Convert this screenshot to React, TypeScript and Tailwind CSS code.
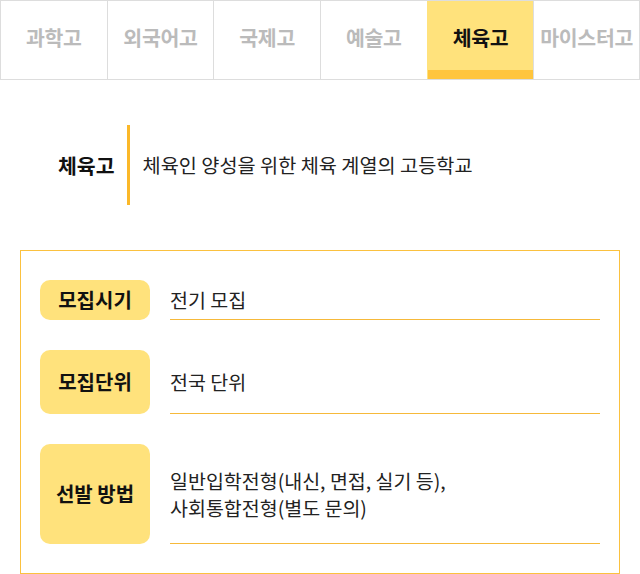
const tabs = ["과학고", "외국어고", "국제고", "예술고", "체육고", "마이스터고"];

const rows = [
  { label: "모집시기", value: ["전기 모집"], height: "h-[40px]" },
  { label: "모집단위", value: ["전국 단위"], height: "h-[64px]" },
  {
    label: "선발 방법",
    value: ["일반입학전형(내신, 면접, 실기 등),", "사회통합전형(별도 문의)"],
    height: "h-[100px]",
  },
];

export default function App() {
  const active = "체육고";

  return (
    <div className="w-[640px] h-[574px] bg-white overflow-hidden font-['Noto_Sans_CJK_KR','Noto_Sans',sans-serif]">
      {/* tabs */}
      <div className="grid grid-cols-6 h-[80px] border-t border-b border-[#dddddd]">
        {tabs.map((tab, i) => {
          const isActive = tab === active;
          return (
            <div
              key={tab}
              className={`relative flex items-center justify-center border-l border-[#dddddd] ${
                i === tabs.length - 1 ? "border-r" : ""
              } ${isActive ? "bg-[#ffe27c] border-l-[#ffe27c]" : ""}`}
            >
              <span
                className={`text-[20.5px] font-bold tracking-[-0.3px] pb-[6px] ${
                  isActive ? "text-[#111111]" : "text-[#bbbbbb]"
                }`}
              >
                {tab}
              </span>
              {isActive && <div className="absolute left-0 right-0 bottom-0 h-[9px] bg-[#ffc53d]" />}
            </div>
          );
        })}
      </div>

      {/* intro */}
      <div className="flex items-center mt-[45px] pl-[58px] h-[80px]">
        <h2 className="text-[20.5px] font-bold text-[#111111]">체육고</h2>
        <div className="ml-[12px] w-[3px] h-full bg-[#fbb829]" />
        <p className="ml-[13px] text-[19.7px] text-[#222222]">
          체육인 양성을 위한 체육 계열의 고등학교
        </p>
      </div>

      {/* info box */}
      <div className="mx-[20px] mt-[45px] border border-[#fbc13f] px-[19px] py-[29px] flex flex-col gap-[30px]">
        {rows.map((row) => (
          <div key={row.label} className={`flex ${row.height}`}>
            <div className="w-[110px] shrink-0 rounded-[10px] bg-[#ffe27c] flex items-center justify-center">
              <span className="text-[20px] font-bold text-[#111111]">{row.label}</span>
            </div>
            <div className="ml-[20px] flex-1 flex flex-col justify-center border-b border-[#f6b93a] text-[19.5px] leading-[27px] text-[#222222]">
              {row.value.map((line) => (
                <div key={line}>{line}</div>
              ))}
            </div>
          </div>
        ))}
      </div>
    </div>
  );
}
